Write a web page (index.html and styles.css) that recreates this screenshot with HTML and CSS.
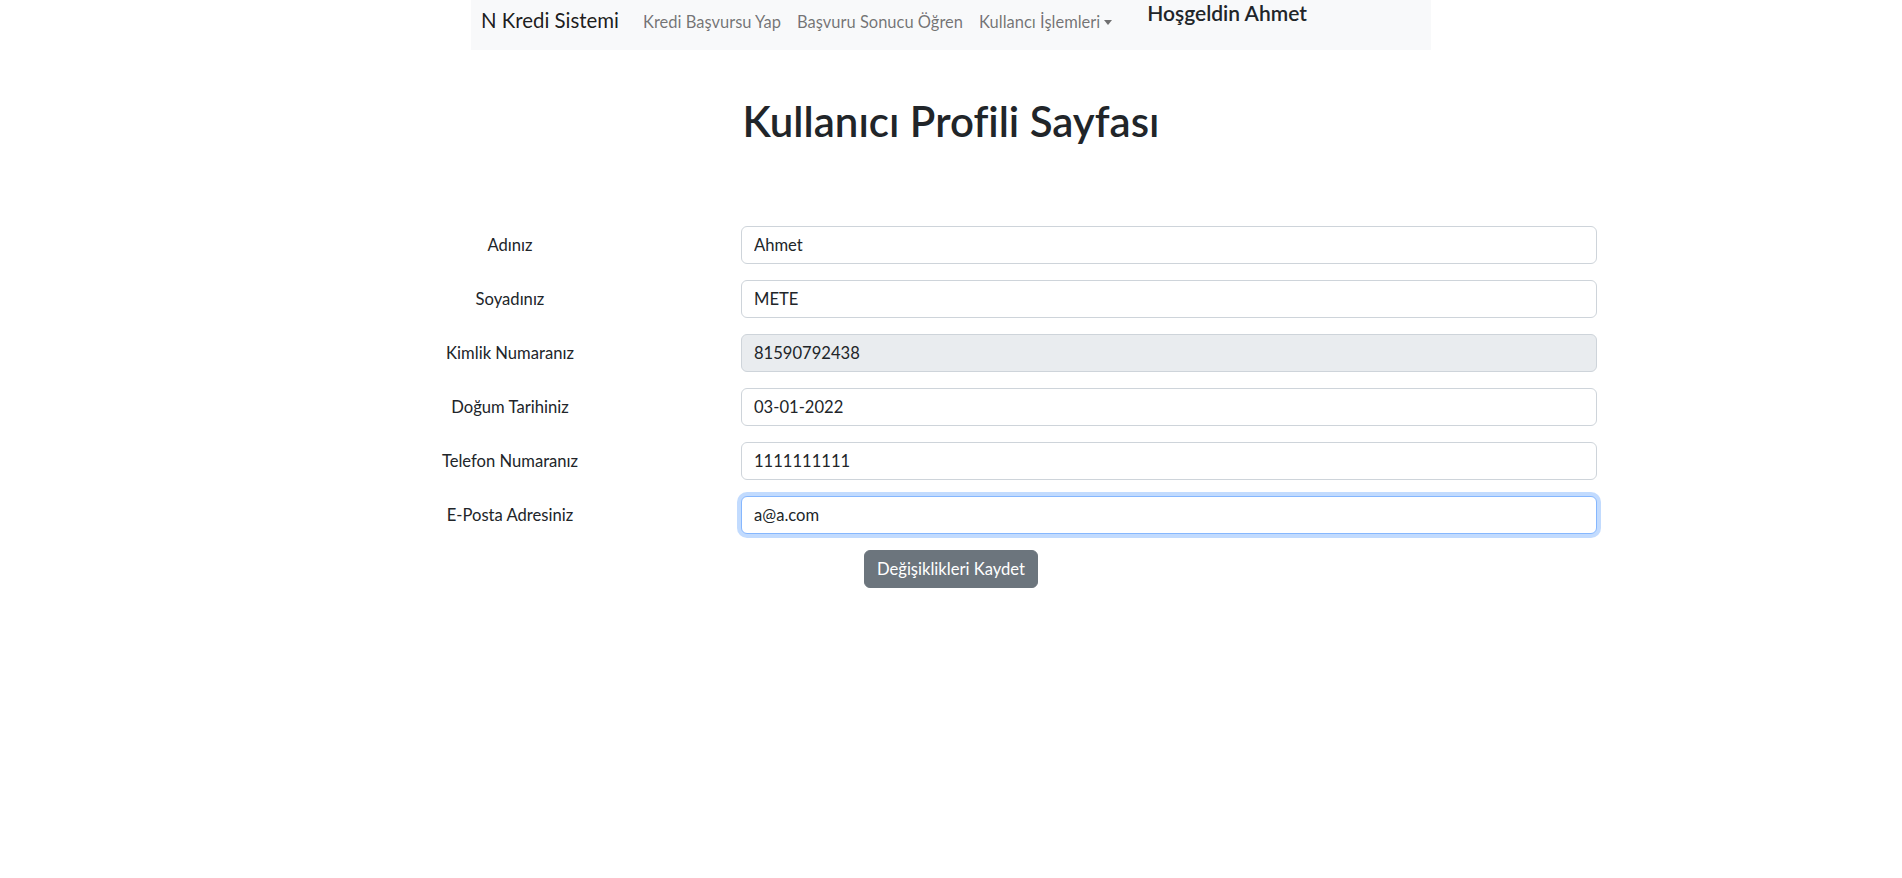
FILE: index.html
```html
<!DOCTYPE html>
<html lang="tr">
<head>
<meta charset="utf-8">
<title>Kullanıcı Profili Sayfası</title>
<link rel="stylesheet" href="styles.css">
</head>
<body>
<nav class="navbar">
  <a class="brand" href="#">N Kredi Sistemi</a>
  <ul class="nav-links">
    <li><a class="nav-link" href="#">Kredi Başvursu Yap</a></li>
    <li><a class="nav-link" href="#">Başvuru Sonucu Öğren</a></li>
    <li><a class="nav-link dropdown" href="#">Kullancı İşlemleri<span class="caret"></span></a></li>
  </ul>
  <h5 class="welcome">Hoşgeldin Ahmet</h5>
</nav>
<main class="page">
  <h1 class="title">Kullanıcı Profili Sayfası</h1>
  <form class="profile-form">
    <label class="form-label">Adınız</label>
    <input class="form-control" type="text" value="Ahmet">
    <label class="form-label">Soyadınız</label>
    <input class="form-control" type="text" value="METE">
    <label class="form-label">Kimlik Numaranız</label>
    <input class="form-control" type="text" value="81590792438" disabled>
    <label class="form-label">Doğum Tarihiniz</label>
    <input class="form-control" type="text" value="03-01-2022">
    <label class="form-label">Telefon Numaranız</label>
    <input class="form-control" type="text" value="1111111111">
    <label class="form-label">E-Posta Adresiniz</label>
    <input class="form-control focused" type="text" value="a@a.com">
  </form>
  <div class="actions">
    <button class="btn-secondary" type="button">Değişiklikleri Kaydet</button>
  </div>
</main>
</body>
</html>
```
FILE: styles.css
```css
* { box-sizing: border-box; }
html, body { margin: 0; padding: 0; background: #fff; }
body {
  font-family: "Lato", "Open Sans", sans-serif;
  font-size: 16.6px;
  line-height: 1.5;
  color: #212529;
}
.navbar {
  width: 960px;
  height: 50px;
  margin: 0 auto;
  background: #f8f9fa;
  padding: 0 12px 0 10px;
  display: flex;
  align-items: flex-start;
}
.brand {
  font-size: 20.4px;
  line-height: 30px;
  padding-top: 5px;
  color: rgba(0,0,0,.9);
  text-decoration: none;
  margin-right: 16px;
}
.nav-links {
  list-style: none;
  margin: 0;
  padding: 0;
  display: flex;
}
.nav-link {
  display: block;
  padding: 10px 8px 0;
  font-size: 16.5px;
  line-height: 24px;
  color: rgba(0,0,0,.55);
  text-decoration: none;
}
.caret {
  display: inline-block;
  margin-left: 4px;
  vertical-align: 3px;
  border-top: 5px solid;
  border-left: 4px solid transparent;
  border-right: 4px solid transparent;
}
.welcome {
  margin: 0 0 0 27px;
  padding-top: 1px;
  font-size: 21px;
  font-weight: 600;
  line-height: 24px;
  color: #212529;
}
.title {
  margin: 47px 0 0;
  text-align: center;
  font-size: 42px;
  font-weight: 600;
  line-height: 48px;
}
.profile-form {
  margin: 81px 0 0 279px;
  width: 1318px;
  display: grid;
  grid-template-columns: 462px 856px;
  row-gap: 16px;
}
.form-label {
  text-align: center;
  line-height: 38px;
}
.form-control {
  height: 38px;
  padding: 6px 12px;
  font: inherit;
  color: #212529;
  background: #fff;
  border: 1px solid #ced4da;
  border-radius: 6px;
  outline: none;
}
.form-control:disabled { background: #e9ecef; }
.form-control.focused {
  border-color: #86b7fe;
  box-shadow: 0 0 0 4px rgba(13,110,253,.25);
}
.actions {
  margin-top: 16px;
  display: flex;
  justify-content: center;
}
.btn-secondary {
  height: 38px;
  padding: 6px 12px;
  font: inherit;
  color: #fff;
  background: #6c757d;
  border: 1px solid #6c757d;
  border-radius: 6px;
}
```
